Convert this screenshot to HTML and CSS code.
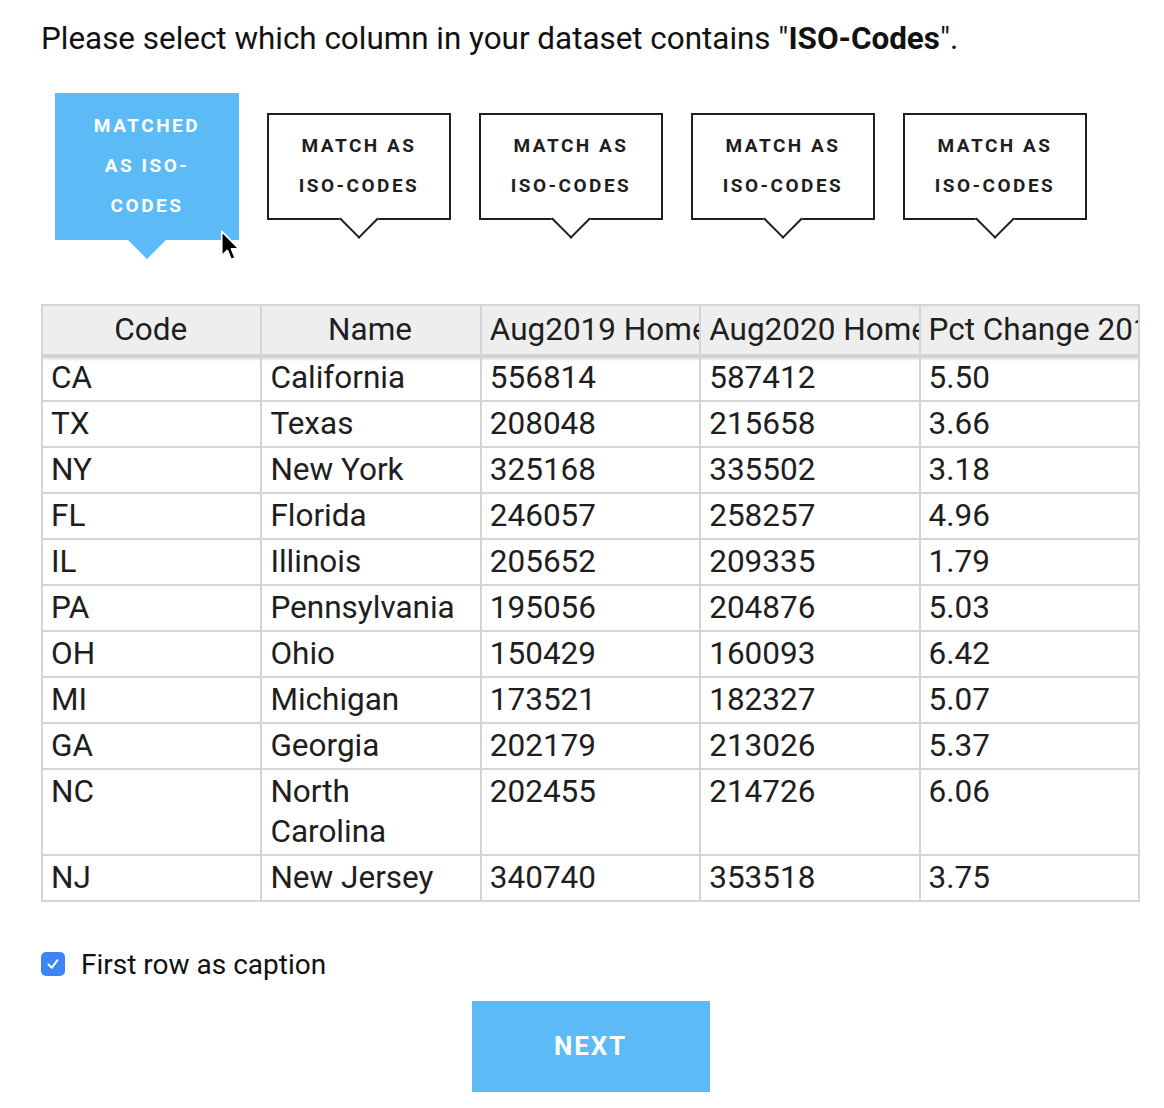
FILE: index.html
```html
<!DOCTYPE html>
<html>
<head>
<meta charset="utf-8">
<link rel="stylesheet" href="styles.css">
</head>
<body>
<div class="page">
  <p class="intro">Please select which column in your dataset contains "<b>ISO-Codes</b>".</p>

  <div class="matchers">
    <div class="match active">Matched as ISO-Codes</div>
    <div class="match">Match as ISO-Codes</div>
    <div class="match">Match as ISO-Codes</div>
    <div class="match">Match as ISO-Codes</div>
    <div class="match">Match as ISO-Codes</div>
    <svg class="cursor" width="21" height="34" viewBox="0 0 18 28">
      <path d="M1.5 1.5 L1.5 22.5 L6.3 17.8 L9.6 25.6 L13 24.1 L9.8 16.5 L16.3 16.5 Z" fill="#000" stroke="#fff" stroke-width="1.4" stroke-linejoin="round"/>
    </svg>
  </div>

  <table class="data">
    <thead>
      <tr><th>Code</th><th>Name</th><th>Aug2019 Home Value</th><th>Aug2020 Home Value</th><th>Pct Change 2019-2020</th></tr>
    </thead>
    <tbody>
      <tr><td>CA</td><td>California</td><td>556814</td><td>587412</td><td>5.50</td></tr>
      <tr><td>TX</td><td>Texas</td><td>208048</td><td>215658</td><td>3.66</td></tr>
      <tr><td>NY</td><td>New York</td><td>325168</td><td>335502</td><td>3.18</td></tr>
      <tr><td>FL</td><td>Florida</td><td>246057</td><td>258257</td><td>4.96</td></tr>
      <tr><td>IL</td><td>Illinois</td><td>205652</td><td>209335</td><td>1.79</td></tr>
      <tr><td>PA</td><td>Pennsylvania</td><td>195056</td><td>204876</td><td>5.03</td></tr>
      <tr><td>OH</td><td>Ohio</td><td>150429</td><td>160093</td><td>6.42</td></tr>
      <tr><td>MI</td><td>Michigan</td><td>173521</td><td>182327</td><td>5.07</td></tr>
      <tr><td>GA</td><td>Georgia</td><td>202179</td><td>213026</td><td>5.37</td></tr>
      <tr><td>NC</td><td>North Carolina</td><td>202455</td><td>214726</td><td>6.06</td></tr>
      <tr><td>NJ</td><td>New Jersey</td><td>340740</td><td>353518</td><td>3.75</td></tr>
    </tbody>
  </table>

  <label class="check">
    <span class="box"><svg width="16" height="16" viewBox="0 0 16 16"><path d="M3.5 8.5 L6.7 11.8 L12.5 4.2" fill="none" stroke="#fff" stroke-width="2" stroke-linecap="round" stroke-linejoin="round"/></svg></span>
    <span class="check-label">First row as caption</span>
  </label>

  <div class="actions">
    <button class="next">Next</button>
  </div>
</div>
</body>
</html>
```

FILE: styles.css
```css
html, body {
  margin: 0;
  padding: 0;
  background: #fff;
}

body {
  font-family: Roboto, "Liberation Sans", sans-serif;
  color: #1a1a1a;
}

.page {
  padding: 0 24px 0 41px;
}

.intro {
  margin: 0;
  padding-top: 19px;
  font-size: 31.4px;
  line-height: 40px;
  color: #111;
}

.intro b {
  font-weight: 700;
}

.matchers {
  position: relative;
  display: flex;
  align-items: center;
  gap: 28px;
  margin: 34px 0 0 14px;
  height: 147px;
}

.match {
  position: relative;
  box-sizing: border-box;
  width: 184px;
  padding: 11px 22px 12px;
  border: 2px solid #1e1e1e;
  background: #fff;
  text-align: center;
  text-transform: uppercase;
  font-weight: 700;
  font-size: 19px;
  letter-spacing: 2.5px;
  line-height: 40px;
  color: #1e1e1e;
}

.match::after {
  content: "";
  position: absolute;
  left: 50%;
  bottom: -15px;
  box-sizing: border-box;
  width: 28px;
  height: 28px;
  background: #fff;
  border-right: 2px solid #1e1e1e;
  border-bottom: 2px solid #1e1e1e;
  transform: translateX(-50%) rotate(45deg);
}

.match.active {
  background: #5cbbf6;
  border-color: #5cbbf6;
  color: #fff;
}

.match.active::after {
  background: #5cbbf6;
  border-color: #5cbbf6;
}

.cursor {
  position: absolute;
  left: 165px;
  top: 136px;
}

.data {
  margin-top: 64px;
  width: 1099px;
  table-layout: fixed;
  border-collapse: collapse;
  border: 2px solid #d4d4d4;
  font-size: 31.5px;
  color: #1e1e1e;
}

.data th,
.data td {
  border: 2px solid #d4d4d4;
  padding: 2px 10px 2px 8px;
  line-height: 40px;
  vertical-align: top;
  text-align: left;
  overflow: hidden;
}

.data th {
  background: #eeeeee;
  font-weight: 400;
  text-align: center;
  white-space: nowrap;
  line-height: 44px;
}

.data tbody tr:first-child td {
  background: linear-gradient(rgba(0, 0, 0, 0.22), rgba(0, 0, 0, 0) 5px);
}

.check {
  display: flex;
  align-items: center;
  gap: 16px;
  margin-top: 46px;
  height: 32px;
}

.box {
  display: flex;
  align-items: center;
  justify-content: center;
  width: 24px;
  height: 24px;
  border-radius: 5px;
  background: #3d85f5;
}

.check-label {
  font-size: 28px;
  color: #111;
}

.actions {
  display: flex;
  justify-content: center;
  width: 1099px;
  margin-top: 21px;
}

.next {
  width: 238px;
  height: 91px;
  border: 0;
  background: #5cbbf6;
  color: #fff;
  font-family: Roboto, "Liberation Sans", sans-serif;
  font-weight: 700;
  font-size: 26px;
  letter-spacing: 1.8px;
  text-transform: uppercase;
  padding-bottom: 2px;
  cursor: pointer;
}
```
